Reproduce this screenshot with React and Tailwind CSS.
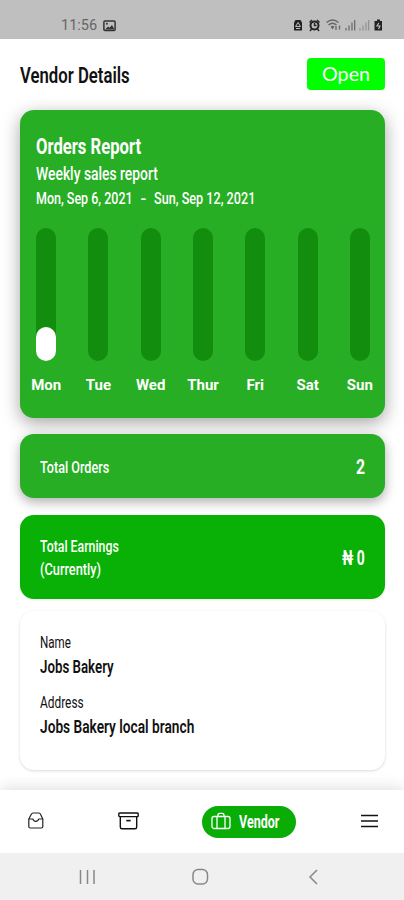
import { useLayoutEffect, useRef, useState } from "react";

// Narrow display lettering: squeezes a line of text to the given width.
function Condensed({ width, className = "", children }) {
  const ref = useRef(null);
  const [scale, setScale] = useState(1);
  useLayoutEffect(() => {
    setScale(width / ref.current.offsetWidth);
  }, [width]);
  return (
    <div className={`shrink-0 whitespace-nowrap ${className}`} style={{ width }}>
      <span ref={ref} className="inline-block origin-left" style={{ transform: `scaleX(${scale})` }}>
        {children}
      </span>
    </div>
  );
}

const days = [
  { label: "Mon", value: 25.5 },
  { label: "Tue", value: 0 },
  { label: "Wed", value: 0 },
  { label: "Thur", value: 0 },
  { label: "Fri", value: 0 },
  { label: "Sat", value: 0 },
  { label: "Sun", value: 0 },
];

function StatusBar() {
  return (
    <div className="flex h-[39px] shrink-0 items-center justify-between bg-[#bfbfbf] pt-[12px] pr-[20px] pl-[61px]">
      <div className="flex items-center gap-[6px] text-[#666]">
        <Condensed width={36} className="pt-px text-[14.5px] leading-[18px]">11:56</Condensed>
        <svg width="13" height="12" viewBox="0 0 13 12">
          <rect x="0.9" y="1" width="11.2" height="9.6" rx="1" fill="none" stroke="#333" strokeWidth="1.5" />
          <path d="M2 9.5 5 6.5l1.5 1.2L9 5l2.5 4.5z" fill="#333" />
          <circle cx="3.9" cy="3.8" r="1" fill="#333" />
        </svg>
      </div>
      <svg width="91" height="14" viewBox="293 19 91 14" fill="none">
        <path d="M294 22.5 295.5 20h5l1.5 2.500V30.500h-8z" fill="#222" />
        <path d="M295.500 26.500 298 22.500l2.500 4zM296 28.500h4" stroke="#bfbfbf" strokeWidth="1" />
        <circle cx="314.500" cy="25.500" r="4" stroke="#222" strokeWidth="2" />
        <path d="M314.500 23v2.500h2M309.500 22.500l2.500-2.500M319.500 22.500 317 20M311.500 29l-1.500 2M317.500 29l1.500 2" stroke="#222" strokeWidth="1.400" />
        <path d="M326.500 22.500q6-5 12 0M328.500 25q4-3.500 8 0" stroke="#666" strokeWidth="1.500" />
        <path d="M330.500 26.500q2-1.500 4 0l-2 3z" fill="#666" />
        <path d="M336 26v4M339.500 25.500v4" stroke="#666" strokeWidth="1.300" />
        <path d="M346 28v2.500M349 25.500v5M352 22.500v8M354.700 20v10.500" stroke="#666" strokeWidth="1.200" />
        <path d="M360 28v2.500M363 25.500v5M366 22.500v8M368.700 20v10.500" stroke="#888" strokeWidth="1" />
        <path d="M377 19.500h3v1.500h2v9.500h-7.500V21h2.500z" fill="#222" />
        <path d="M378.800 23 377 26h3l-1.500 3" stroke="#bfbfbf" strokeWidth="1.200" />
      </svg>
    </div>
  );
}

function OrdersReport() {
  return (
    <section className="h-[308px] shrink-0 rounded-[14px] bg-[#27ae25] pt-[22px] text-white shadow-[0_5px_18px_rgba(0,0,0,0.36)]">
      <div className="pl-[16px]">
        <Condensed width={105} className="text-[22.5px] leading-[28px] font-bold">Orders Report</Condensed>
        <Condensed width={122} className="mt-px text-[19px] leading-[26px] font-medium">Weekly sales report</Condensed>
        <div className="-mt-px flex text-[17px] leading-[24px] font-medium">
          <Condensed width={97}>Mon, Sep 6, 2021</Condensed>
          <Condensed width={6} className="mx-[7.5px]">-</Condensed>
          <Condensed width={101}>Sun, Sep 12, 2021</Condensed>
        </div>
      </div>
      <div className="-mr-px mt-[17.5px] grid grid-cols-7">
        {days.map((d) => (
          <div key={d.label} className="flex flex-col items-center">
            <div className="flex h-[133.5px] w-5 items-end rounded-full bg-[#138d0e]">
              <div className="w-full rounded-full bg-white" style={{ height: `${d.value}%` }} />
            </div>
            <span className="mt-[14px] text-[15px] leading-5 font-bold">{d.label}</span>
          </div>
        ))}
      </div>
    </section>
  );
}

function BottomNav() {
  return (
    <nav className="flex h-[63px] shrink-0 items-center bg-white pl-[28px] shadow-[0_-2px_14px_rgba(0,0,0,0.13)]">
      <svg className="-mt-[2px]" width="16" height="17" viewBox="0 0 16 17" fill="none" stroke="#222" strokeWidth="1.200" strokeLinejoin="round">
        <path d="M.8 7V14.500q0 1.500 1.500 1.500h11q1.500 0 1.500-1.500V7L12.500 2.300Q12 1 11 1H5Q4 1 3.300 2.300z" />
        <path d="M.8 7h4.200q.3 2.300 2.800 2.300T10.600 7h4.200" />
      </svg>
      <svg className="-mt-[2px] ml-[74px]" width="21" height="18" viewBox="0 0 21 18" fill="none" stroke="#111" strokeWidth="1.400" strokeLinejoin="round">
        <rect x="0.800" y="1" width="19.400" height="3.600" rx="0.800" />
        <path d="M2.300 4.600V15q0 1.800 1.700 1.800h13q1.700 0 1.700-1.800V4.600" />
        <path d="M8.300 8.600h4.400" strokeWidth="1.600" />
      </svg>
      <div className="ml-[63px] flex h-8 w-[94px] items-center rounded-full bg-[#09ad06] pl-[9px] text-white">
        <svg className="-mt-[2px]" width="20" height="18" viewBox="0 0 20 18" fill="none" stroke="white" strokeWidth="1.300">
          <rect x="1" y="4.500" width="18" height="12" rx="2" />
          <path d="M6 16.500V4.500M14 16.500V4.500M7 4.500V3q0-1.700 1.700-1.700h2.600Q13 1.300 13 3v1.500" />
        </svg>
        <Condensed width={40} className="ml-[8px] text-[17.5px] leading-6 font-bold">Vendor</Condensed>
      </div>
      <svg className="-mt-[2px] ml-[65px]" width="17" height="14" viewBox="0 0 17 14" stroke="#111" strokeWidth="1.500">
        <path d="M0 1.500h17M0 7h17M0 12.500h17" />
      </svg>
    </nav>
  );
}

export default function App() {
  return (
    <div className="flex h-[900px] w-[404px] flex-col overflow-hidden bg-white font-['Roboto',sans-serif] text-[#111]">
      <StatusBar />
      <main className="flex h-[751px] shrink-0 flex-col px-[20px] pr-[19px]">
        <header className="flex h-[71px] shrink-0 items-center justify-between">
          <Condensed width={110} className="pt-px text-[22.5px] leading-7 font-semibold">Vendor Details</Condensed>
          <button className="-mt-px flex h-8 w-[78px] items-center justify-center rounded-[4px] bg-[#00ff00] font-['Lato',sans-serif] text-white">
            <Condensed width={48} className="text-left text-[18.5px] leading-6">Open</Condensed>
          </button>
        </header>
        <OrdersReport />
        <section className="mt-4 flex h-[64px] shrink-0 items-center justify-between rounded-[14px] bg-[#27ae25] px-5 text-white shadow-[0_4px_12px_rgba(0,0,0,0.32)]">
          <Condensed width={69} className="pt-px text-[17px] leading-6 font-medium">Total Orders</Condensed>
          <Condensed width={9} className="pt-[2px] text-[21px] leading-6 font-bold">2</Condensed>
        </section>
        <section className="mt-[17px] flex h-[84px] shrink-0 items-center justify-between rounded-[14px] bg-[#09b006] px-5 text-white shadow-[0_1px_3px_rgba(0,0,0,0.08)]">
          <div className="pt-px text-[17px] leading-[22.5px] font-medium">
            <Condensed width={79}>Total Earnings</Condensed>
            <Condensed width={61}>(Currently)</Condensed>
          </div>
          <Condensed width={23} className="pt-[2px] text-[20px] leading-6 font-bold">₦ 0</Condensed>
        </section>
        <section className="mt-3 h-[159px] shrink-0 rounded-[14px] bg-white px-5 pt-[20px] shadow-[0_1px_3px_rgba(0,0,0,0.15)]">
          <Condensed width={31} className="text-[16.5px] leading-6">Name</Condensed>
          <Condensed width={74} className="text-[18.5px] leading-6 font-semibold">Jobs Bakery</Condensed>
          <Condensed width={44} className="mt-3 text-[16.5px] leading-6">Address</Condensed>
          <Condensed width={154} className="text-[18.5px] leading-6 font-semibold">Jobs Bakery local branch</Condensed>
        </section>
      </main>
      <BottomNav />
      <div className="flex h-[47px] shrink-0 items-center bg-[#f0f0f0] pl-[79px]">
        <svg width="240" height="18" viewBox="79 868 240 18" fill="none" stroke="#888" strokeWidth="1.500">
          <path d="M80.500 870v14M87.500 870v14M94 870v14" />
          <rect x="193" y="869.500" width="14.500" height="14.500" rx="5" />
          <path d="m317 870-7 7 7 7" />
        </svg>
      </div>
    </div>
  );
}
